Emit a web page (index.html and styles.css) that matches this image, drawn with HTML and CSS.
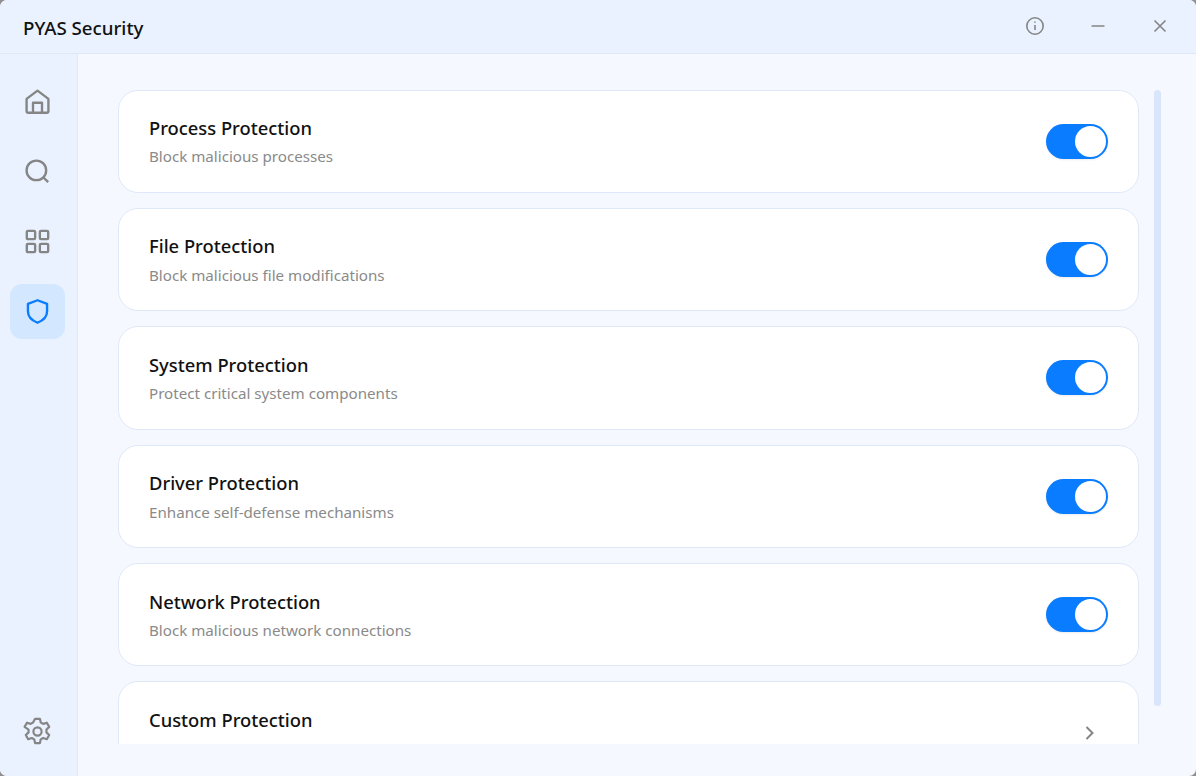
FILE: index.html
```html
<!DOCTYPE html>
<html lang="en">
<head>
<meta charset="UTF-8">
<title>PYAS Security</title>
<link rel="stylesheet" href="styles.css">
</head>
<body>
<div class="window">
    <div class="titlebar">
        <div class="app-name">PYAS Security</div>
        <div class="win-btns">
            <svg class="win-icon" viewBox="0 0 20 20"><circle cx="10" cy="10" r="8.200"/><path d="M10 9v5"/><path d="M10 5.600v1.200"/></svg>
            <svg class="win-icon" viewBox="0 0 20 20"><path d="M3.500 10h13"/></svg>
            <svg class="win-icon" viewBox="0 0 20 20"><path d="M4.500 4.500l11 11M15.500 4.500l-11 11"/></svg>
        </div>
    </div>
    <div class="body">
        <div class="sidebar">
            <div class="nav-btn">
                <svg class="nav-icon" viewBox="0 0 24 24"><path d="M12 2.300L2.300 9.700V20.500a1.500 1.500 0 0 0 1.500 1.500h16.400a1.500 1.500 0 0 0 1.500-1.500V9.700z"/><path d="M8 22V13.100h8V22"/></svg>
            </div>
            <div class="nav-btn">
                <svg class="nav-icon" viewBox="0 0 24 24"><circle cx="11" cy="11" r="8.700"/><path d="M17.300 17.300l4.200 4.200"/></svg>
            </div>
            <div class="nav-btn">
                <svg class="nav-icon" viewBox="0 0 24 24"><rect x="2.500" y="2.500" width="7.400" height="7.400" rx="1"/><rect x="14.100" y="2.500" width="7.400" height="7.400" rx="1"/><rect x="2.500" y="14.100" width="7.400" height="7.400" rx="1"/><rect x="14.100" y="14.100" width="7.400" height="7.400" rx="1"/></svg>
            </div>
            <div class="nav-btn active">
                <svg class="nav-icon" viewBox="0 0 24 24"><path d="M12 2L3.500 5.200V12c0 4.800 3.600 8 8.500 10 4.900-2 8.500-5.200 8.500-10V5.200z"/></svg>
            </div>
            <div class="nav-spacer"></div>
            <div class="nav-btn">
                <svg class="nav-icon gear" viewBox="0 0 24 24"><circle cx="12" cy="12" r="3.400"/><path d="M10 1.500h4l.7 3.100 2 1.100 3-1 2 3.500-2.300 2.200v2.300l2.300 2.200-2 3.500-3-1-2 1.100-.7 3.100h-4l-.7-3.100-2-1.100-3 1-2-3.500 2.300-2.200v-2.300L1.300 8.200l2-3.500 3 1 2-1.100z"/></svg>
            </div>
        </div>
        <div class="main">
            <div class="list">
                <div class="card">
                    <div class="card-text"><div class="card-title">Process Protection</div><div class="card-desc">Block malicious processes</div></div>
                    <div class="switch"><div class="knob"></div></div>
                </div>
                <div class="card">
                    <div class="card-text"><div class="card-title">File Protection</div><div class="card-desc">Block malicious file modifications</div></div>
                    <div class="switch"><div class="knob"></div></div>
                </div>
                <div class="card">
                    <div class="card-text"><div class="card-title">System Protection</div><div class="card-desc">Protect critical system components</div></div>
                    <div class="switch"><div class="knob"></div></div>
                </div>
                <div class="card">
                    <div class="card-text"><div class="card-title">Driver Protection</div><div class="card-desc">Enhance self-defense mechanisms</div></div>
                    <div class="switch"><div class="knob"></div></div>
                </div>
                <div class="card">
                    <div class="card-text"><div class="card-title">Network Protection</div><div class="card-desc">Block malicious network connections</div></div>
                    <div class="switch"><div class="knob"></div></div>
                </div>
                <div class="card">
                    <div class="card-text"><div class="card-title">Custom Protection</div></div>
                    <svg class="chevron" viewBox="0 0 12 16"><path d="M2.500 2l6 6-6 6"/></svg>
                </div>
            </div>
            <div class="scroll-track"><div class="scroll-thumb"></div></div>
        </div>
    </div>
</div>
</body>
</html>
```

FILE: styles.css
```css
* {
    margin: 0;
    padding: 0;
    box-sizing: border-box;
}
html, body {
    height: 100%;
    overflow: hidden;
    background: #8f8f8f;
}
.window {
    height: 776px;
    display: flex;
    flex-direction: column;
    background: #f5f8ff;
    border-radius: 7px;
    overflow: hidden;
    font-family: "Noto Sans", "Open Sans", sans-serif;
}
.titlebar {
    height: 54px;
    flex: none;
    display: flex;
    align-items: center;
    justify-content: space-between;
    padding: 0 26px 0 23px;
    background: #eaf2ff;
    border-bottom: 1px solid #dfe8f8;
}
.app-name {
    margin-top: 2px;
    font-size: 18.700px;
    font-weight: 500;
    color: #111;
}
.win-btns {
    display: flex;
    gap: 42.300px;
    align-items: center;
    margin-top: -2px;
}
.win-icon {
    width: 20px;
    height: 20px;
    fill: none;
    stroke: #858585;
    stroke-width: 1.600;
}
.body {
    flex: 1;
    display: flex;
    min-height: 0;
}
.sidebar {
    width: 78px;
    flex: none;
    display: flex;
    flex-direction: column;
    gap: 15px;
    padding: 20px 0 17px 10px;
    background: #eaf2ff;
    border-right: 1px solid #dfe8f8;
}
.nav-btn {
    width: 55px;
    height: 55px;
    display: flex;
    align-items: center;
    justify-content: center;
    border-radius: 12px;
}
.nav-btn.active {
    background: #d3e7ff;
}
.nav-spacer {
    flex: 1;
}
.nav-icon {
    width: 27px;
    height: 27px;
    fill: none;
    stroke: #858585;
    stroke-width: 2.100;
    stroke-linejoin: round;
}
.nav-icon.gear {
    width: 29px;
    height: 29px;
    stroke-width: 1.800;
}
.active .nav-icon {
    stroke: #0a7cff;
}
.main {
    flex: 1;
    display: flex;
    min-width: 0;
    padding: 35.500px 35px 32px 40px;
}
.list {
    flex: 1;
    display: flex;
    flex-direction: column;
    gap: 15px;
    overflow: hidden;
}
.card {
    height: 103.400px;
    flex: none;
    display: flex;
    align-items: center;
    justify-content: space-between;
    padding: 0 30px;
    background: #fff;
    border: 1px solid #dfe8f8;
    border-radius: 20px;
}
.card-title {
    font-size: 18.350px;
    font-weight: 500;
    line-height: 26px;
    color: #111;
}
.card-desc {
    margin-top: 5.500px;
    font-size: 15.150px;
    line-height: 21px;
    color: #8a8a8a;
}
.card:last-child .card-text {
    height: 52px;
}
.switch {
    width: 62px;
    height: 35px;
    padding: 2px 2px 2px 29px;
    background: #0a7cff;
    border-radius: 18px;
    box-shadow: 0 1px 2px rgba(0, 0, 0, 0.08);
}
.knob {
    width: 31px;
    height: 31px;
    background: #fff;
    border-radius: 50%;
}
.chevron {
    width: 12px;
    height: 16px;
    margin-right: 12px;
    fill: none;
    stroke: #858585;
    stroke-width: 2;
}
.scroll-track {
    width: 7px;
    flex: none;
    margin-left: 15px;
}
.scroll-thumb {
    height: 616px;
    background: #d9e5fa;
    border-radius: 4px;
}
```
